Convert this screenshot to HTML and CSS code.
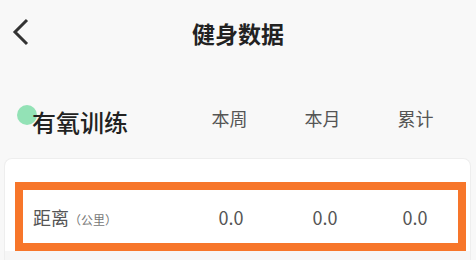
FILE: index.html
```html
<!DOCTYPE html>
<html lang="zh-CN">
<head>
    <meta charset="UTF-8" />
    <meta name="viewport" content="width=device-width, initial-scale=1.0" />
    <title>健身数据</title>
    <link rel="stylesheet" href="styles.css">
</head>
<body>
    <div class="nav-bar">
        <span class="back-btn">
            <svg width="40" height="66" viewBox="0 0 40 66">
                <polyline points="27,20 15,32 27,44" fill="none" stroke="#333" stroke-width="3" />
            </svg>
        </span>
        <h1 class="nav-title">健身数据</h1>
        <span></span>
    </div>

    <div class="section-head">
        <h2 class="section-title"><span class="dot"></span>有氧训练</h2>
        <span class="col-head">本周</span>
        <span class="col-head">本月</span>
        <span class="col-head">累计</span>
    </div>

    <div class="data-card">
        <div class="data-row highlight">
            <span class="row-label">距离<small>（公里）</small></span>
            <span class="row-value">0.0</span>
            <span class="row-value">0.0</span>
            <span class="row-value">0.0</span>
        </div>
        <div class="data-row"></div>
    </div>
</body>
</html>
```

FILE: styles.css
```css
body {
    margin: 0;
    background-color: #f8f8f8;
    font-family: "Noto Sans CJK SC", "Noto Sans", sans-serif;
    color: #333;
}

.nav-bar {
    display: grid;
    grid-template-columns: 40px 1fr 40px;
    align-items: center;
    height: 66px;
}

.back-btn svg {
    display: block;
}

.nav-title {
    margin: 0;
    text-align: center;
    font-size: 23px;
    font-weight: 700;
    color: #222;
}

.section-head {
    display: grid;
    grid-template-columns: 1fr 93px 93px 93px;
    align-items: center;
    height: 92px;
    padding: 0 14px 0 32px;
}

.section-title {
    position: relative;
    margin: 18px 0 0 0;
    font-size: 24px;
    font-weight: 500;
    color: #222;
}

.section-title .dot {
    position: absolute;
    left: -15px;
    top: 1px;
    width: 20px;
    height: 20px;
    border-radius: 50%;
    background-color: #93e2b6;
    z-index: -1;
}

.col-head {
    text-align: center;
    font-size: 18px;
    color: #555;
    margin-top: 12px;
}

.data-card {
    margin: 0 5px 0 4px;
    padding-top: 23px;
    background-color: #fff;
    border: 1px solid #eee;
    border-bottom: none;
    border-radius: 8px 8px 0 0;
}

.data-row {
    display: grid;
    grid-template-columns: 1fr 94px 94px 86px;
    align-items: center;
    height: 53px;
    padding-left: 10px;
    background-color: #f6f6f6;
}

.data-row.highlight {
    margin: 0 4px 0 10px;
    border: 8px solid #f7762a;
    background-color: #fff;
}

.row-label {
    font-size: 18px;
    color: #555;
}

.row-label small {
    font-size: 12px;
    color: #777;
}

.row-value {
    text-align: center;
    font-size: 18px;
    color: #555;
}
```
